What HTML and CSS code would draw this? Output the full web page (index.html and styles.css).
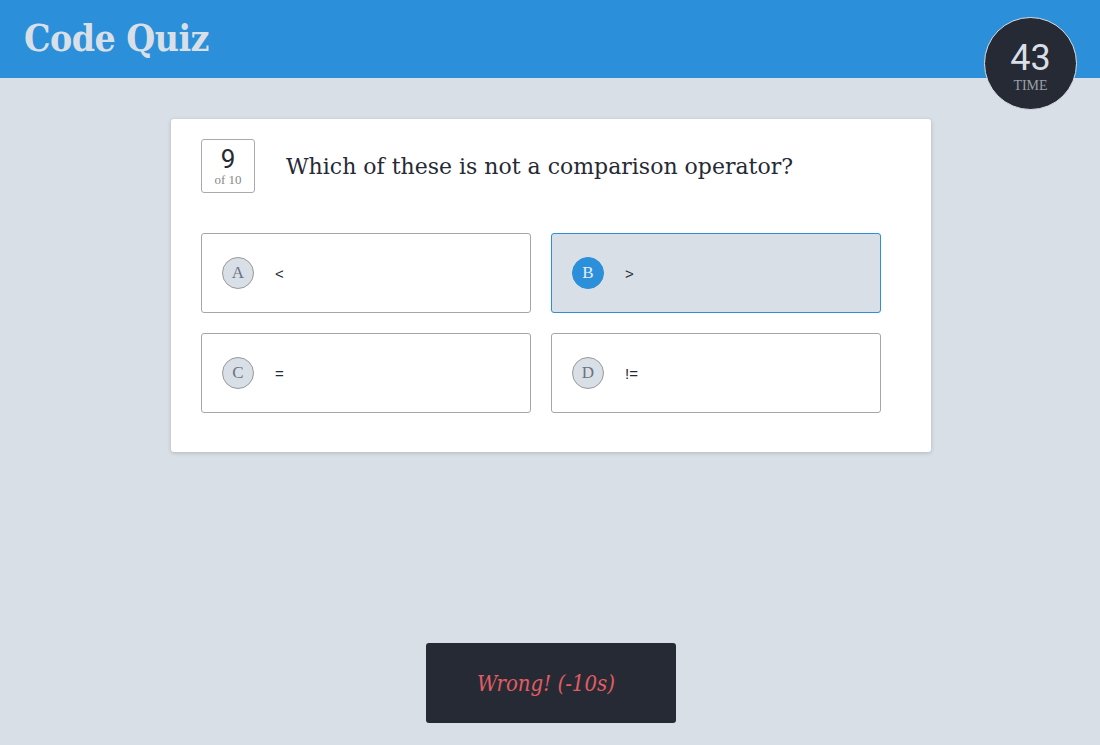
FILE: index.html
```html
<!DOCTYPE html>
<html>
<head>
<meta charset="utf-8">
<link rel="stylesheet" href="styles.css">
</head>
<body>
<header class="topbar">
  <h1 class="brand">Code Quiz</h1>
  <div class="timer">
    <span class="timer-num">43</span>
    <span class="timer-label">TIME</span>
  </div>
</header>
<main class="stage">
  <section class="card">
    <div class="qhead">
      <div class="qcount">
        <span class="qnum">9</span>
        <span class="qof">of 10</span>
      </div>
      <h2 class="qtext">Which of these is not a comparison operator?</h2>
    </div>
    <div class="options">
      <div class="option"><span class="badge">A</span><span class="otext">&lt;</span></div>
      <div class="option selected"><span class="badge">B</span><span class="otext">&gt;</span></div>
      <div class="option"><span class="badge">C</span><span class="otext">=</span></div>
      <div class="option"><span class="badge">D</span><span class="otext">!=</span></div>
    </div>
  </section>
  <div class="feedback">Wrong! (-10s)</div>
</main>
</body>
</html>
```

FILE: styles.css
```css
* { box-sizing: border-box; }
html, body { margin: 0; padding: 0; }
body {
  background: #d9dfe7;
  font-family: "Roboto Slab", "DejaVu Serif", serif;
  color: #262a35;
  height: 745px;
  overflow: hidden;
}
.topbar {
  background: #2b90d9;
  height: 78px;
  display: flex;
  align-items: center;
  padding: 0 24px;
  position: relative;
}
.brand {
  margin: 0;
  font-family: "Roboto Slab", "DejaVu Serif Condensed", "DejaVu Serif", serif;
  font-size: 37px;
  font-weight: 700;
  color: #d9dfe7;
  letter-spacing: -0.5px;
  margin-top: -2px;
}
.timer {
  position: absolute;
  right: 23px;
  top: 17px;
  width: 93px;
  height: 93px;
  border-radius: 50%;
  background: #262a35;
  border: 1px solid #d9dfe7;
  padding-top: 4px;
  display: flex;
  flex-direction: column;
  align-items: center;
  justify-content: center;
  color: #d9dfe7;
}
.timer-num {
  font-family: Roboto, "Liberation Sans", sans-serif;
  font-size: 36px;
  line-height: 42px;
}
.timer-label {
  font-family: "Liberation Serif", serif;
  font-size: 14px;
  color: #9aa0a8;
  line-height: 14px;
  margin-bottom: 2px;
}
.stage {
  display: flex;
  flex-direction: column;
  align-items: center;
  padding-top: 41px;
  padding-left: 2px;
}
.card {
  width: 760px;
  background: #fff;
  border-radius: 3px;
  box-shadow: 0 1px 4px rgba(0,0,0,0.18);
  padding: 20px 30px 39px 30px;
}
.qhead {
  display: flex;
  align-items: center;
  gap: 31px;
}
.qcount {
  width: 54px;
  height: 54px;
  border: 1px solid #aaa;
  border-radius: 3px;
  display: flex;
  flex-direction: column;
  align-items: center;
  justify-content: center;
}
.qnum {
  font-family: Roboto, "Liberation Sans", sans-serif;
  font-size: 26px;
  line-height: 26px;
  color: #262a35;
}
.qof {
  font-family: "Liberation Serif", serif;
  font-size: 13px;
  line-height: 15px;
  color: #888;
}
.qtext {
  margin: 0;
  font-size: 22px;
  font-weight: 400;
  color: #262a35;
}
.options {
  display: grid;
  grid-template-columns: 330px 330px;
  gap: 20px;
  margin-top: 40px;
}
.option {
  height: 80px;
  border: 1px solid #a6a6a6;
  border-radius: 3px;
  background: #fff;
  display: flex;
  align-items: center;
  padding-left: 20px;
}
.option.selected {
  background: #d9dfe7;
  border-color: #2b90d9;
}
.badge {
  width: 32px;
  height: 32px;
  border-radius: 50%;
  background: #d9dfe7;
  border: 1px solid #999;
  display: flex;
  align-items: center;
  justify-content: center;
  font-family: "Liberation Serif", serif;
  font-size: 17px;
  color: #6b7280;
}
.option.selected .badge {
  background: #2b90d9;
  border-color: #2b90d9;
  color: #e6edf5;
}
.otext {
  margin-left: 21px;
  font-family: "Liberation Sans", sans-serif;
  font-size: 15px;
  color: #262a35;
}
.feedback {
  margin-top: 191px;
  width: 250px;
  height: 80px;
  background: #262a35;
  border-radius: 3px;
  display: flex;
  align-items: center;
  justify-content: center;
  padding-right: 10px;
  font-family: "Roboto Slab", "DejaVu Serif Condensed", "DejaVu Serif", serif;
  font-style: italic;
  font-size: 22px;
  color: #e05d61;
}
```
